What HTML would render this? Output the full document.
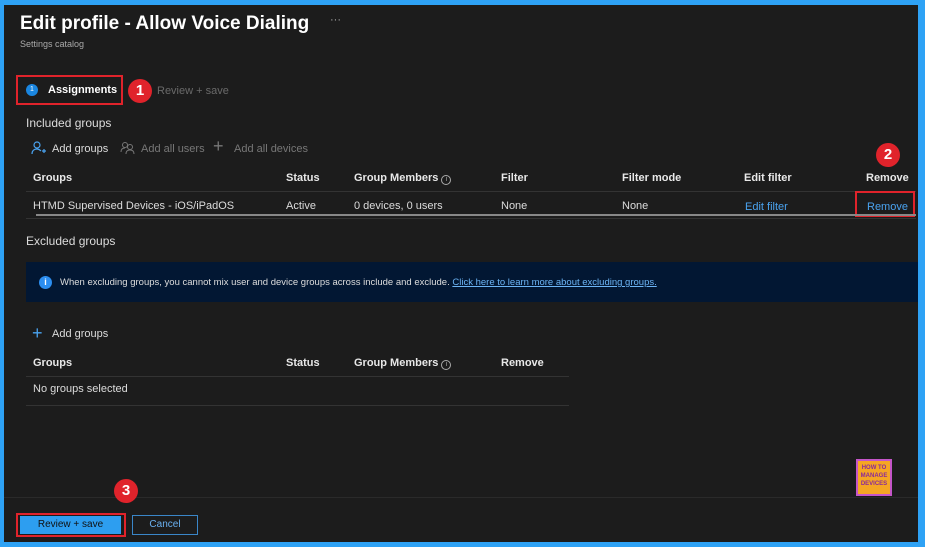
<!DOCTYPE html>
<html><head><meta charset="utf-8"><style>
*{margin:0;padding:0;box-sizing:border-box}
body{width:925px;height:547px;background:#2ea2f5;position:relative;overflow:hidden;font-family:"Liberation Sans",sans-serif;color:#e6e6e6}
#p{position:absolute;left:4px;top:5px;width:914px;height:537px;background:#1c1c1c}
.a{position:absolute;white-space:nowrap}
.t{font-size:11px;color:#dcdcdc}
.b{font-weight:bold;font-size:11px;color:#e8e8e8}
.l{color:#4aa3f0;font-size:11px}
.hr{position:absolute;height:1px;background:#333}
.badge{position:absolute;width:24px;height:24px;border-radius:50%;background:#e0232b;color:#fff;font-weight:bold;font-size:15px;text-align:center;line-height:24px}
.red{position:absolute;border:2px solid #e0232b}
.i{display:inline-block;width:10px;height:10px;border:1px solid #aaa;border-radius:50%;font-size:7px;line-height:8px;text-align:center;font-weight:normal;color:#aaa;vertical-align:0}
</style></head><body>
<div id="p"></div>
<div class="a" style="left:20px;top:13px;font-size:19px;font-weight:bold;color:#fff">Edit profile - Allow Voice Dialing</div>
<div class="a" style="left:330px;top:14px;font-size:11px;color:#aaa">···</div>
<div class="a" style="left:20px;top:39px;font-size:9px;color:#aaa">Settings catalog</div>

<div class="red" style="left:16px;top:75px;width:107px;height:30px"></div>
<div class="a" style="left:26px;top:84px;width:12px;height:12px;border-radius:50%;background:#1a86e0;color:#fff;font-size:7px;text-align:center;line-height:12px">1</div>
<div class="a" style="left:48px;top:84px;font-size:11px;font-weight:bold;color:#fff">Assignments</div>
<div class="badge" style="left:128px;top:79px">1</div>
<div class="a" style="left:157px;top:85px;font-size:11px;color:#6a6a6a">Review + save</div>

<div class="a t" style="left:26px;top:116px;font-size:12px">Included groups</div>
<svg class="a" style="left:31px;top:141px" width="16" height="14" viewBox="0 0 16 14"><circle cx="6" cy="4" r="3" fill="none" stroke="#4aa3f0" stroke-width="1.2"/><path d="M1 13c0-4 3-5 5-5s3 1 4 2M11 10h4M13 8v4" fill="none" stroke="#4aa3f0" stroke-width="1.2"/></svg>
<div class="a t" style="left:52px;top:143px">Add groups</div>
<svg class="a" style="left:120px;top:141px" width="16" height="14" viewBox="0 0 16 14"><circle cx="5" cy="4" r="2.5" fill="none" stroke="#777"/><circle cx="10" cy="6" r="2.5" fill="none" stroke="#777"/><path d="M1 11c0-3 2-4 4-4M6 13c0-3 2-4 4-4s4 1 4 4" fill="none" stroke="#777"/></svg>
<div class="a" style="left:141px;top:143px;font-size:11px;color:#777">Add all users</div>
<div class="a" style="left:213px;top:136px;font-size:18px;color:#777;font-weight:300">+</div>
<div class="a" style="left:234px;top:143px;font-size:11px;color:#777">Add all devices</div>

<div class="a b" style="left:33px;top:172px">Groups</div>
<div class="a b" style="left:286px;top:172px">Status</div>
<div class="a b" style="left:354px;top:172px">Group Members <span class="i">i</span></div>
<div class="a b" style="left:501px;top:172px">Filter</div>
<div class="a b" style="left:622px;top:172px">Filter mode</div>
<div class="a b" style="left:744px;top:172px">Edit filter</div>
<div class="a b" style="left:866px;top:172px">Remove</div>
<div class="hr" style="left:26px;top:191px;width:890px"></div>
<div class="a t" style="left:33px;top:200px">HTMD Supervised Devices - iOS/iPadOS</div>
<div class="a t" style="left:286px;top:200px">Active</div>
<div class="a t" style="left:354px;top:200px">0 devices, 0 users</div>
<div class="a t" style="left:501px;top:200px">None</div>
<div class="a t" style="left:622px;top:200px">None</div>
<div class="a l" style="left:745px;top:201px">Edit filter</div>
<div class="a l" style="left:867px;top:201px">Remove</div>
<div class="red" style="left:855px;top:191px;width:60px;height:26px"></div>
<div class="badge" style="left:876px;top:143px">2</div>
<div class="hr" style="left:36px;top:214px;width:880px;background:#888;height:2px"></div>
<div class="hr" style="left:26px;top:218px;width:890px"></div>

<div class="a t" style="left:26px;top:234px;font-size:12px">Excluded groups</div>
<div class="a" style="left:26px;top:262px;width:892px;height:40px;background:#021733"></div>
<div class="a" style="left:39px;top:276px;width:13px;height:13px;border-radius:50%;background:#2c8ef0;color:#fff;font-size:9px;font-weight:bold;text-align:center;line-height:13px">i</div>
<div class="a" style="left:60px;top:277px;font-size:9.5px;color:#ddd">When excluding groups, you cannot mix user and device groups across include and exclude. <span style="color:#6cb4f5;text-decoration:underline">Click here to learn more about excluding groups.</span></div>

<div class="a" style="left:32px;top:323px;font-size:18px;color:#4aa3f0">+</div>
<div class="a t" style="left:52px;top:328px">Add groups</div>
<div class="a b" style="left:33px;top:357px">Groups</div>
<div class="a b" style="left:286px;top:357px">Status</div>
<div class="a b" style="left:354px;top:357px">Group Members <span class="i">i</span></div>
<div class="a b" style="left:501px;top:357px">Remove</div>
<div class="hr" style="left:26px;top:376px;width:543px"></div>
<div class="a t" style="left:33px;top:383px">No groups selected</div>
<div class="hr" style="left:26px;top:405px;width:543px"></div>

<div class="a" style="left:856px;top:459px;width:36px;height:37px;background:#c455c8;padding:2px"><div style="background:#f5a623;width:100%;height:100%;font-size:6px;font-weight:bold;color:#8a2a9a;text-align:center;line-height:8px;padding-top:3px">HOW TO<br>MANAGE<br>DEVICES</div></div>
<div class="hr" style="left:4px;top:497px;width:914px;background:#2a2a2a"></div>
<div class="badge" style="left:114px;top:479px">3</div>
<div class="red" style="left:16px;top:513px;width:110px;height:24px"></div>
<div class="a" style="left:20px;top:516px;width:101px;height:18px;background:#2d9ef0;color:#111;font-size:10px;text-align:center;line-height:18px">Review + save</div>
<div class="a" style="left:132px;top:515px;width:66px;height:20px;border:1px solid #3a86c8;color:#6ab0f0;font-size:10px;text-align:center;line-height:18px">Cancel</div>
</body></html>
